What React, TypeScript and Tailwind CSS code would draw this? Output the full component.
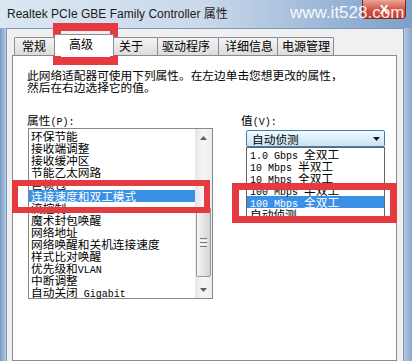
import React from 'react';

const PROPERTIES = [
  '环保节能',
  '接收端调整',
  '接收缓冲区',
  '节能乙太网路',
  '巨帧包',
  '连接速度和双工模式',
  '流控制',
  '魔术封包唤醒',
  '网络地址',
  '网络唤醒和关机连接速度',
  '样式比对唤醒',
  '优先级和VLAN',
  '中断调整',
  '自动关闭 Gigabit',
];

const VALUES = [
  '1.0 Gbps 全双工',
  '10 Mbps 半双工',
  '10 Mbps 全双工',
  '100 Mbps 半双工',
  '100 Mbps 全双工',
  '自动侦测',
];

// latin runs use a narrow mono face, like SimSun does
function Mixed({ text }: { text: string }) {
  const parts = text.match(/[\x00-\x7f]+|[^\x00-\x7f]+/g) ?? [];
  return (
    <>
      {parts.map((p, i) =>
        /^[\x00-\x7f]+$/.test(p) ? (
          <span key={i} className="font-['Liberation_Mono',monospace] text-[10px] whitespace-pre">
            {p}
          </span>
        ) : (
          <span key={i}>{p}</span>
        )
      )}
    </>
  );
}

function Tab({ children, className }: { children: React.ReactNode; className: string }) {
  return (
    <div
      className={`h-[18px] border border-b-0 border-[#898c95] rounded-t-[2px] bg-gradient-to-b from-[#f4f4f4] to-[#dcdcdc] text-[12px] leading-[16px] whitespace-nowrap ${className}`}
    >
      {children}
    </div>
  );
}

function Arrow({ up }: { up?: boolean }) {
  return (
    <div className="h-[17px] flex items-center justify-center">
      <svg width="7" height="4" viewBox="0 0 7 4">
        <path d={up ? 'M0 4 L3.5 0 L7 4 Z' : 'M0 0 L3.5 4 L7 0 Z'} fill="#5f5f5f" />
      </svg>
    </div>
  );
}

export default function App() {
  return (
    <div className="relative w-[412px] h-[361px] overflow-hidden bg-[#9fb8d6] font-['Noto_Sans_CJK_SC',sans-serif] text-black">
      {/* Title bar */}
      <div className="relative h-[28px] flex items-center pl-[7px] bg-gradient-to-r from-[#dbe6f2] via-[#c9d9eb] to-[#7d9fc8]">
        <span className="text-[12px] text-[#1b1b1b] font-['Liberation_Sans','Noto_Sans_CJK_SC',sans-serif] whitespace-nowrap">
          Realtek PCIe GBE Family Controller 属性
        </span>
        <div className="absolute right-[6px] top-0 w-[44px] h-[19px] rounded-b-[4px] border border-t-0 border-[#7a2b22] bg-gradient-to-b from-[#e9a79a] via-[#d2574a] to-[#c4392b] flex items-center justify-center">
          <span className="text-white text-[13px] font-bold font-['Liberation_Sans',sans-serif] leading-none">X</span>
        </div>
        <span className="absolute left-[290px] top-[3px] text-[17px] leading-[20px] text-white/90 font-['Liberation_Sans',sans-serif] whitespace-nowrap">
          www.it528.com
        </span>
      </div>

      {/* Window body */}
      <div className="flex h-[333px]">
        <div className="w-[6px] bg-gradient-to-r from-[#7799c4] to-[#b6cbe3]" />
        <div className="flex-1 flex flex-col bg-[#f0f0f0] border border-b-0 border-[#7f97b7] pt-[8px] pl-[5px] pr-[6px]">
          {/* Tabs */}
          <div className="flex items-end h-[18px] ml-[2px] relative z-10">
            <Tab className="w-[42px] pl-[7px]">常规</Tab>
            <div className="relative z-10 -mx-[2px] mb-[-1px] w-[60px] h-[22px] pl-[14px] pt-[1px] border border-b-0 border-[#898c95] rounded-t-[2px] bg-white text-[12px] leading-[16px]">
              高级
            </div>
            <Tab className="w-[46px] pl-[6px]">关于</Tab>
            <Tab className="-ml-px w-[62px] pl-[4px]">驱动程序</Tab>
            <Tab className="-ml-px w-[60px] pl-[6px]">详细信息</Tab>
            <Tab className="-ml-px w-[57px] pl-[4px]">电源管理</Tab>
          </div>

          {/* Panel */}
          <div className="flex-1 border border-[#898c95] bg-white pt-[13px] pl-[14px]">
            <p className="text-[11.7px] leading-[12px] whitespace-nowrap">
              此网络适配器可使用下列属性。在左边单击您想更改的属性，
              <br />
              然后在右边选择它的值。
            </p>

            <div className="flex mt-[21px]">
              {/* Property list */}
              <div className="w-[186px]">
                <div className="h-[12px] text-[11.7px] leading-[12px]">
                  <Mixed text="属性(P):" />
                </div>
                <div className="mt-[2px] ml-[1px] w-[185px] h-[171px] flex border border-[#828790] bg-white">
                  <div className="flex-1 pt-[1px]">
                    {PROPERTIES.map((p) => (
                      <div
                        key={p}
                        className={`h-[12px] pl-[2px] text-[11.7px] leading-[12px] whitespace-nowrap ${
                          p === '连接速度和双工模式' ? 'bg-[#3a8fe6] text-white' : ''
                        }`}
                      >
                        <Mixed text={p} />
                      </div>
                    ))}
                  </div>
                  {/* Scrollbar */}
                  <div className="w-[17px] flex flex-col bg-gradient-to-r from-[#e6e6e6] via-[#f6f6f6] to-[#ececec]">
                    <Arrow up />
                    <div className="flex-1 relative">
                      <div className="absolute left-[1px] right-[1px] top-[61px] h-[70px] rounded-[2px] border border-[#999] bg-gradient-to-r from-[#f4f4f4] via-[#e6e6e6] to-[#d2d2d2] flex flex-col items-center justify-center gap-[1px]">
                        <div className="w-[7px] h-px bg-[#7a7a7a]" />
                        <div className="w-[7px] h-px bg-white" />
                        <div className="w-[7px] h-px bg-[#7a7a7a]" />
                        <div className="w-[7px] h-px bg-white" />
                        <div className="w-[7px] h-px bg-[#7a7a7a]" />
                      </div>
                    </div>
                    <Arrow />
                  </div>
                </div>
              </div>

              {/* Value */}
              <div className="ml-[28px]">
                <div className="h-[12px] text-[11.7px] leading-[12px]">
                  <Mixed text="值(V):" />
                </div>
                <div className="relative mt-[4px] ml-[5px] w-[139px] h-[17px] flex items-center pl-[5px] pr-[4px] rounded-[2px] border border-[#3c7fb1] bg-gradient-to-b from-[#f4f9fd] to-[#c9e3f6]">
                  <span className="flex-1 text-[11.7px] leading-[12px]">自动侦测</span>
                  <svg width="7" height="4" viewBox="0 0 7 4">
                    <path d="M0 0 L3.5 4 L7 0 Z" fill="#1a1a1a" />
                  </svg>
                  <div className="absolute left-[-1px] top-[16px] w-[139px] border border-[#646464] bg-white">
                    {VALUES.map((v) => (
                      <div
                        key={v}
                        className={`h-[12px] pl-[3px] text-[11.7px] leading-[12px] whitespace-nowrap ${
                          v === '100 Mbps 全双工' ? 'bg-[#3a8fe6] text-white' : ''
                        }`}
                      >
                        <Mixed text={v} />
                      </div>
                    ))}
                  </div>
                </div>
              </div>
            </div>
          </div>
        </div>
        <div className="w-[8px] bg-gradient-to-r from-[#b3c7df] to-[#8aa6c8]" />
      </div>

      {/* Red annotation boxes */}
      <div className="absolute left-[53px] top-[23px] w-[65px] h-[42px] border-[8px] border-[#e53a3f]" />
      <div className="absolute left-[12px] top-[180px] w-[198px] h-[33px] border-[6px] border-[#e53a3f]" />
      <div className="absolute left-[232px] top-[183px] w-[165px] h-[40px] border-[7px] border-[#e53a3f]" />
    </div>
  );
}
